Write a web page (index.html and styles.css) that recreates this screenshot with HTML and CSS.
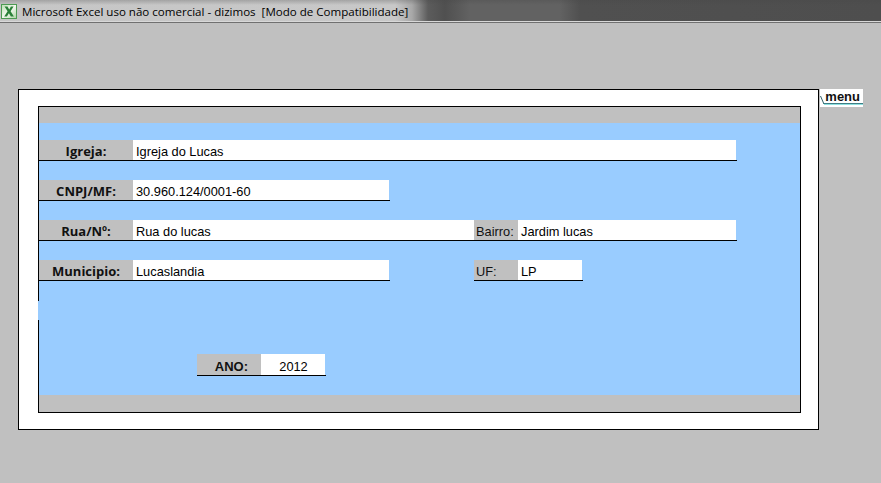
FILE: index.html
```html
<!DOCTYPE html>
<html lang="pt">
<head>
<meta charset="utf-8">
<title>Microsoft Excel</title>
<link rel="stylesheet" href="styles.css">
</head>
<body>
<header class="titlebar">
  <svg class="xl" width="16" height="15" viewBox="0 0 16 15"><defs><linearGradient id="xlbg" x1="0" y1="0" x2="1" y2="1"><stop offset="0" stop-color="#b9dfb0"/><stop offset="0.5" stop-color="#f2f8ee"/><stop offset="1" stop-color="#a9d4a2"/></linearGradient></defs><rect x="0.5" y="0.5" width="15" height="14" fill="url(#xlbg)" stroke="#4c9a52"/><path d="M3.500 2.500h3l1.700 3 1.700-3h2.700l-3 4.800 3.300 5.200h-3l-2-3.300-2 3.300H3.200l3.400-5.200z" fill="#2a8038"/></svg>
  <span class="titletext">Microsoft Excel uso não comercial - dizimos&nbsp; [Modo de Compatibilidade]</span>
</header>
<main class="sheet">
  <section class="outer">
    <div class="inner">
      <div class="band"></div>
      <div class="form">
        <div class="row">
          <div class="lbl">Igreja:</div>
          <div class="val w603">Igreja do Lucas</div>
        </div>
        <div class="row">
          <div class="lbl">CNPJ/MF:</div>
          <div class="val w256">30.960.124/0001-60</div>
        </div>
        <div class="row">
          <div class="lbl">Rua/Nº:</div>
          <div class="val w341 full">Rua do lucas</div>
          <div class="sub">Bairro:</div>
          <div class="val w218">Jardim lucas</div>
        </div>
        <div class="row">
          <div class="lbl">Municipio:</div>
          <div class="val w256">Lucaslandia</div>
          <div class="gap85"></div>
          <div class="sub">UF:</div>
          <div class="val w64">LP</div>
        </div>
        <div class="year">
          <div class="ylbl">ANO:</div>
          <div class="yval">2012</div>
        </div>
      </div>
      <div class="band bottom"></div>
      <div class="notch"></div>
    </div>
  </section>
  <a class="menu"><svg class="menuline" width="43" height="18" viewBox="0 0 43 18"><path d="M0.500 7l3 7" stroke="#2f5f66" fill="none"/><path d="M3 14.500h40" stroke="#3f7f86" fill="none"/><path d="M4 15.500h39" stroke="#8fe0e0" fill="none"/></svg>menu</a>
</main>
</body>
</html>
```
FILE: styles.css
```css
html, body { margin: 0; padding: 0; }
body {
  width: 881px; height: 483px; overflow: hidden;
  background: #c0c0c0;
  font-family: "Liberation Sans", Arial, sans-serif;
  color: #000;
}
.titlebar {
  display: flex; align-items: center; gap: 5px; padding: 2px 0 0 1px;
  box-sizing: content-box;
  height: 19px;
  background:
    linear-gradient(180deg, rgba(70,70,70,.28) 0, rgba(70,70,70,0) 5px),
    linear-gradient(90deg, #c6c6c6 0, #c8c8c8 395px, #a8a8a8 412px, #5c5c5c 428px, #505050 445px, #626262 470px, #626262 560px, #505050 580px, #4e4e4e 100%);
  border-bottom: 1px solid #d8d8d8;
  box-shadow: 0 1px 0 #707070;
}
.xl { flex: none; }
.titletext { font: 11.550px "Open Sans", "Liberation Sans", sans-serif; color: #000; white-space: nowrap; }
.sheet { display: flex; align-items: flex-start; padding: 67px 0 0 18px; }
.outer {
  width: 801px; height: 341px; box-sizing: border-box;
  background: #fff; border: 1px solid #000; padding: 16px 17px 16px 19px;
}
.inner {
  position: relative;
  height: 307px; box-sizing: border-box; border: 1px solid #000;
  background: #c0c0c0; display: flex; flex-direction: column;
}
.band { height: 16px; flex: none; }
.band.bottom { height: 17px; }
.form { flex: 1; background: #99ccff; padding-top: 17px; display: flex; flex-direction: column; gap: 19px; }
.row { display: flex; height: 21px; box-sizing: border-box; }
.lbl {
  width: 94px; height: 20px; background: #c0c0c0; border-bottom: 1px solid #000; box-sizing: content-box;
  text-align: center; font: bold 13px/23px "Open Sans", "Liberation Sans", sans-serif; color: #111;
}
.val {
  height: 21px; background: linear-gradient(#fff, #fff) no-repeat 0 0 / calc(100% - 1px) 100%;
  border-bottom: 1px solid #000; font-size: 12.800px; line-height: 23px; padding-left: 3px; box-sizing: border-box;
}
.val.full { background-size: 100% 100%; }
.sub {
  width: 44px; height: 21px; background: #c0c0c0; border-bottom: 1px solid #000;
  font-size: 12.800px; line-height: 23px; padding-left: 2px; box-sizing: border-box; color: #111;
}
.w603 { width: 604px; }
.w256 { width: 257px; }
.w341 { width: 341px; }
.w218 { width: 219px; }
.w64 { width: 65px; }
.gap85 { width: 84px; }
.year { display: flex; margin: 54px 0 0 158px; height: 22px; }
.ylbl {
  width: 64px; box-sizing: border-box; background: #c0c0c0; border-bottom: 1px solid #000;
  font: bold 13px/25px "Liberation Sans", sans-serif; text-align: right; padding-right: 13px; color: #111;
}
.yval {
  width: 65px; box-sizing: border-box; background: linear-gradient(#fff, #fff) no-repeat 0 0 / calc(100% - 1px) 100%;
  border-bottom: 1px solid #000; font-size: 12.800px; line-height: 25px; text-align: center;
}
.notch { position: absolute; left: -1px; top: 194px; width: 1px; height: 19px; background: #99ccff; }
.menu {
  position: relative;
  margin: 0 0 0 1px; width: 43px; height: 18px; box-sizing: border-box;
  background: #fff;
  font: bold 13px/15px "Liberation Sans", sans-serif; color: #111; text-align: right; padding-right: 3px;
}
.menuline { position: absolute; left: 0; top: 0; }
```
